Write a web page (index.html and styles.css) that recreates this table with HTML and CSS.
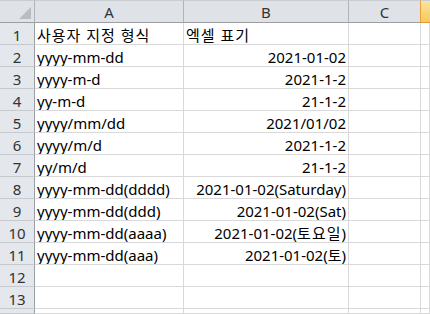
FILE: index.html
```html
<!DOCTYPE html>
<html lang="ko">
<head>
<meta charset="utf-8">
<link rel="stylesheet" href="styles.css">
</head>
<body>
<div class="sheet">
  <div class="hd corner"><svg class="tri" width="12" height="12" viewBox="0 0 12 12"><polygon points="12,0 12,12 0,12" fill="#b9bcc0"/></svg></div>
  <div class="hd col">A</div>
  <div class="hd col">B</div>
  <div class="hd col">C</div>
  <div class="hd col sel"></div>

  <div class="rh">1</div><div class="c ko">사용자 지정 형식</div><div class="c ko">엑셀 표기</div><div class="c"></div><div class="c"></div>
  <div class="rh">2</div><div class="c">yyyy-mm-dd</div><div class="c r">2021-01-02</div><div class="c"></div><div class="c"></div>
  <div class="rh">3</div><div class="c">yyyy-m-d</div><div class="c r">2021-1-2</div><div class="c"></div><div class="c"></div>
  <div class="rh">4</div><div class="c">yy-m-d</div><div class="c r">21-1-2</div><div class="c"></div><div class="c"></div>
  <div class="rh">5</div><div class="c">yyyy/mm/dd</div><div class="c r">2021/01/02</div><div class="c"></div><div class="c"></div>
  <div class="rh">6</div><div class="c">yyyy/m/d</div><div class="c r">2021-1-2</div><div class="c"></div><div class="c"></div>
  <div class="rh">7</div><div class="c">yy/m/d</div><div class="c r">21-1-2</div><div class="c"></div><div class="c"></div>
  <div class="rh">8</div><div class="c">yyyy-mm-dd(dddd)</div><div class="c r">2021-01-02(Saturday)</div><div class="c"></div><div class="c"></div>
  <div class="rh">9</div><div class="c">yyyy-mm-dd(ddd)</div><div class="c r">2021-01-02(Sat)</div><div class="c"></div><div class="c"></div>
  <div class="rh">10</div><div class="c">yyyy-mm-dd(aaaa)</div><div class="c r">2021-01-02(<span class="ko">토요일</span>)</div><div class="c"></div><div class="c"></div>
  <div class="rh">11</div><div class="c">yyyy-mm-dd(aaa)</div><div class="c r">2021-01-02(토)</div><div class="c"></div><div class="c"></div>
  <div class="rh">12</div><div class="c"></div><div class="c"></div><div class="c"></div><div class="c"></div>
  <div class="rh">13</div><div class="c"></div><div class="c"></div><div class="c"></div><div class="c"></div>
  <div class="rh"></div><div class="c"></div><div class="c"></div><div class="c"></div><div class="c"></div>
</div>
</body>
</html>
```

FILE: styles.css
```css
html, body {
  margin: 0;
  padding: 0;
  background: #ffffff;
  overflow: hidden;
}
.sheet {
  display: grid;
  grid-template-columns: 35px 149px 165px 72px 1fr;
  grid-template-rows: 23px repeat(13, 22px) 5px;
  font-family: "Noto Sans", "Noto Sans CJK KR", sans-serif;
  font-size: 15px;
  color: #000;
  width: 430px;
  height: 314px;
  overflow: hidden;
}
.sheet > div {
  box-sizing: border-box;
  display: flex;
  align-items: center;
  overflow: hidden;
  white-space: nowrap;
}
.ko {
  letter-spacing: 1px;
}
.hd {
  background: #dfe3e8;
  border-right: 1px solid #b1b5ba;
  border-bottom: 1px solid #9b9fa4;
  border-top: 1px solid #c9ccd0;
  justify-content: center;
  color: #333;
}
.corner {
  position: relative;
}
.tri {
  position: absolute;
  right: 3px;
  bottom: 3px;
}
.hd.sel {
  background: linear-gradient(#fbe39f, #f6c959);
  border-left: 1px solid #e7a23a;
  border-bottom: 1px solid #e09a35;
  border-right: none;
  margin-left: -1px;
}
.rh {
  background: #e4e7eb;
  border-right: 1px solid #9b9fa4;
  border-bottom: 1px solid #c6cace;
  justify-content: center;
  color: #333;
  padding-top: 2px;
}
.c {
  border-right: 1px solid #d9d9d9;
  border-bottom: 1px solid #d9d9d9;
  padding: 2px 2px 0 2px;
}
.c.r {
  justify-content: flex-end;
}
```
